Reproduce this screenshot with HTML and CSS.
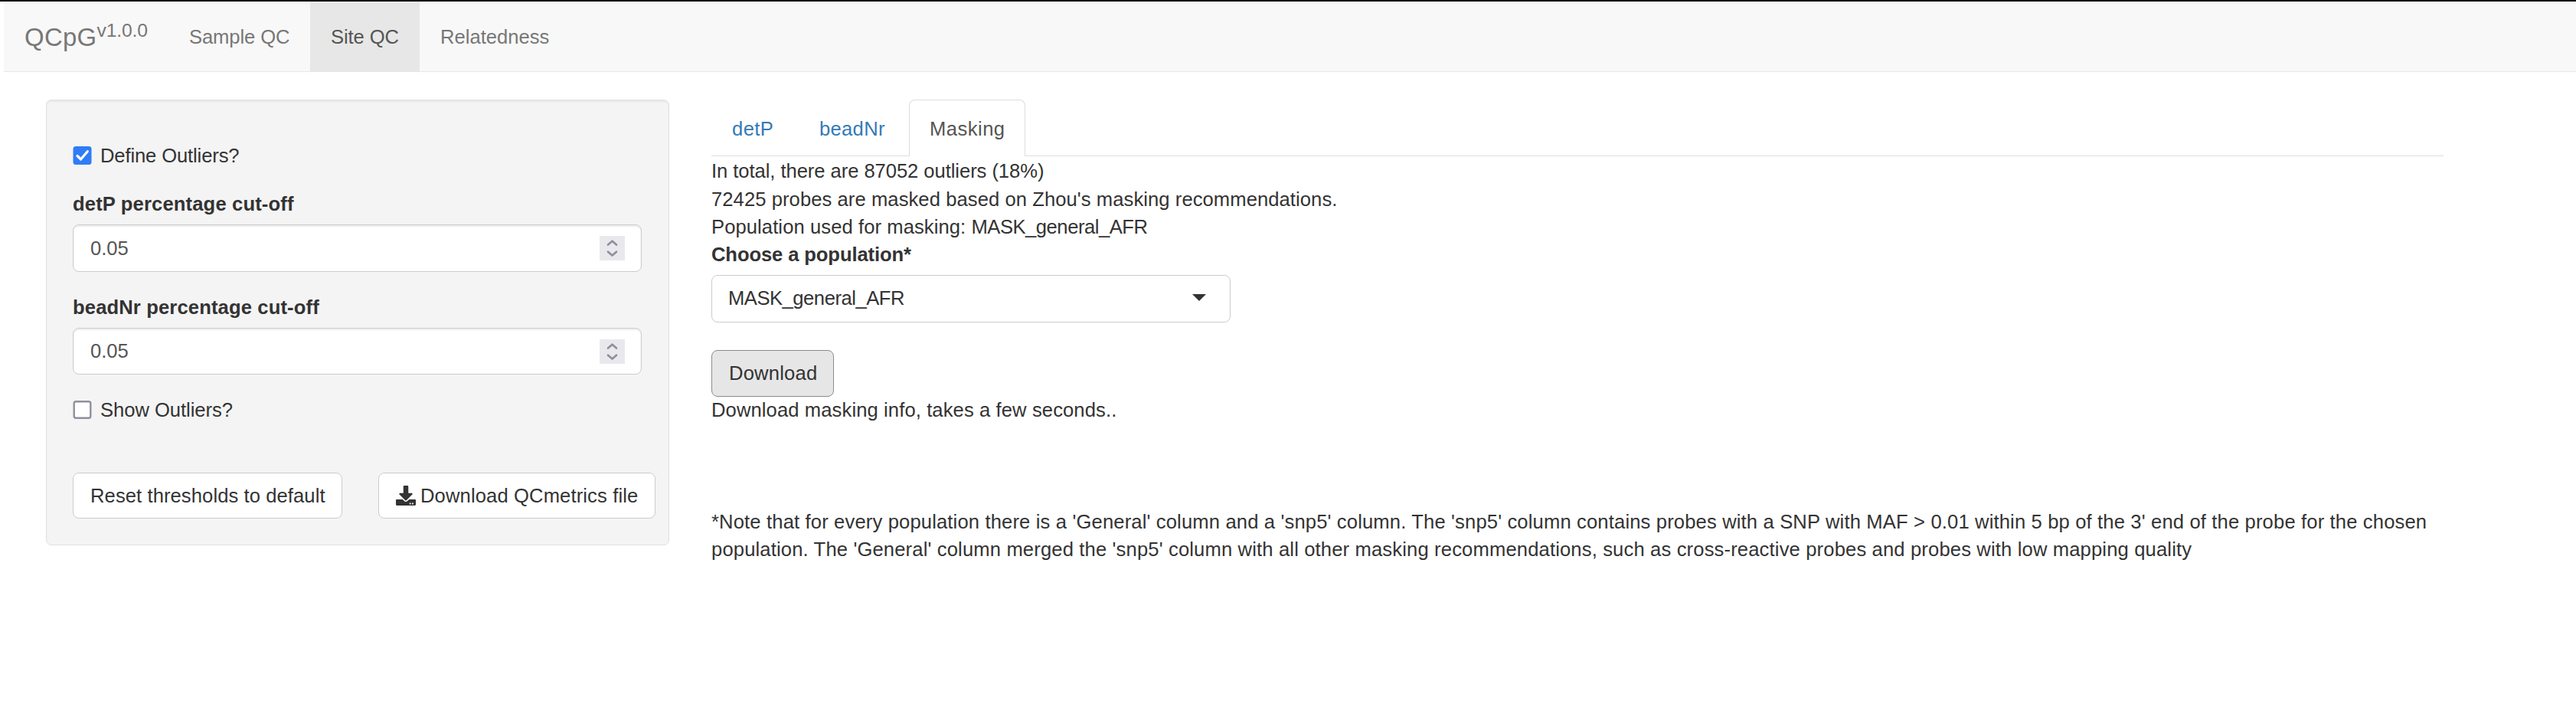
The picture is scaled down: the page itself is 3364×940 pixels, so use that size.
FILE: index.html
```
<!DOCTYPE html>
<html lang="en">
<head>
<meta charset="utf-8">
<title>QCpG</title>
<link rel="stylesheet" href="styles.css">
</head>
<body>
<nav class="navbar">
  <a class="brand">QCpG<sup>v1.0.0</sup></a>
  <a class="nav-link">Sample QC</a>
  <a class="nav-link active">Site QC</a>
  <a class="nav-link relatedness">Relatedness</a>
</nav>
<div class="page">
  <aside class="well">
    <label class="check define">
      <svg class="box" viewBox="0 0 24 24"><rect width="24" height="24" rx="3.5" fill="#2f7cf6"/><path d="M5.5 12.5 10 17 18.8 6.8" fill="none" stroke="#fff" stroke-width="3.2" stroke-linecap="round" stroke-linejoin="round"/></svg>
      <span>Define Outliers?</span>
    </label>
    <label class="field-label first">detP percentage cut-off</label>
    <div class="field"><span>0.05</span>
      <svg class="spin" viewBox="0 0 33 32"><rect width="33" height="32" fill="#e9e9ed"/><path d="M11 11.5 16.5 6.7 22 11.5M11 20.7 16.5 25.5 22 20.7" fill="none" stroke="#8f8f9d" stroke-width="2.7" stroke-linecap="round" stroke-linejoin="round"/></svg>
    </div>
    <label class="field-label second">beadNr percentage cut-off</label>
    <div class="field short"><span>0.05</span>
      <svg class="spin" viewBox="0 0 33 32"><rect width="33" height="32" fill="#e9e9ed"/><path d="M11 11.5 16.5 6.7 22 11.5M11 20.7 16.5 25.5 22 20.7" fill="none" stroke="#8f8f9d" stroke-width="2.7" stroke-linecap="round" stroke-linejoin="round"/></svg>
    </div>
    <label class="check show">
      <svg class="box" viewBox="0 0 24 24"><rect x="1.2" y="1.2" width="21.6" height="21.6" rx="2.5" fill="#fff" stroke="#8f8f9d" stroke-width="2.4"/></svg>
      <span>Show Outliers?</span>
    </label>
    <div class="actions">
      <button class="btn reset">Reset thresholds to default</button>
      <button class="btn metrics"><svg class="dl" viewBox="0 0 512 512"><path fill="#333" d="M216 0h80c13.300 0 24 10.700 24 24v168h87.700c17.800 0 26.700 21.500 14.100 34.100L269.700 378.300c-7.500 7.500-19.800 7.500-27.300 0L90.100 226.100c-12.600-12.600-3.700-34.100 14.100-34.100H192V24c0-13.300 10.700-24 24-24zm296 376v112c0 13.300-10.700 24-24 24H24c-13.300 0-24-10.700-24-24V376c0-13.300 10.700-24 24-24h146.700l49 49c20.100 20.100 52.500 20.100 72.600 0l49-49H488c13.300 0 24 10.700 24 24zm-124 88c0-11-9-20-20-20s-20 9-20 20 9 20 20 20 20-9 20-20zm64 0c0-11-9-20-20-20s-20 9-20 20 9 20 20 20 20-9 20-20z"/></svg><span>Download QCmetrics file</span></button>
    </div>
  </aside>
  <main class="content">
    <div class="tabs">
      <a class="tab detp">detP</a>
      <a class="tab bead">beadNr</a>
      <a class="tab current">Masking</a>
    </div>
    <div class="text">
      <p>In total, there are 87052 outliers (18%)</p>
      <p class="probes">72425 probes are masked based on Zhou's masking recommendations.</p>
      <p class="population">Population used for masking: <span class="mask-name">MASK_general_AFR</span></p>
      <p class="choose">Choose a population*</p>
    </div>
    <div class="select"><span class="mask-name">MASK_general_AFR</span><i class="caret"></i></div>
    <button class="btn download">Download</button>
    <p class="text info">Download masking info, takes a few seconds..</p>
    <p class="text note">*Note that for every population there is a 'General' column and a 'snp5' column. The 'snp5' column contains probes with a SNP with MAF &gt; 0.01 within 5 bp of the 3' end of the probe for the chosen<br>population. The 'General' column merged the 'snp5' column with all other masking recommendations, such as cross-reactive probes and probes with low mapping quality</p>
  </main>
</div>
</body>
</html>
```
FILE: styles.css
```
* { box-sizing: border-box; }
body {
  margin: 0;
  background: #fff;
  border-top: 2px solid #0b0909;
  font: 25.6px/36.57px "Liberation Sans", Arial, sans-serif;
  color: #333;
}
p { margin: 0; }

/* Navigation */
.navbar {
  display: flex;
  height: 92px;
  margin-left: 5px;
  background: #f8f8f8;
  border-bottom: 1px solid #e7e7e7;
  color: #777;
}
.brand {
  width: 215px;
  padding: 29px 0 0 27px;
  font-size: 32.9px;
  letter-spacing: .3px;
  white-space: nowrap;
}
.brand sup {
  font-size: 24.7px;
  line-height: 0;
  letter-spacing: -.14px;
  vertical-align: 12px;
}
.nav-link {
  height: 92px;
  padding: 28px 26px 0 27px;
  letter-spacing: -.1px;
  white-space: nowrap;
}
.nav-link.active {
  width: 143px;
  background: #e7e7e7;
  color: #555;
}
.nav-link:nth-child(2) { width: 185px; }
.relatedness { letter-spacing: 0; }

/* Page columns */
.page {
  display: grid;
  grid-template-columns: 814px 2262px;
  column-gap: 55px;
  align-items: start;
  padding: 36px 0 0 60px;
}

/* Sidebar */
.well {
  height: 582px;
  padding: 54px 17px 0 34px;
  background: #f4f4f4;
  border: 1px solid #e1e1e1;
  border-radius: 7px;
  box-shadow: inset 0 2px 2px rgba(0, 0, 0, .05);
}
.check {
  display: flex;
  align-items: center;
  gap: 11px;
  height: 36px;
}
.box { width: 25px; height: 24px; flex: none; }
.define { letter-spacing: -.13px; }
.show { margin-top: 28px; letter-spacing: -.04px; }
.field-label {
  display: block;
  height: 36px;
  font-weight: bold;
}
.field-label.first { margin-top: 27px; letter-spacing: .14px; }
.field-label.second { margin-top: 28px; letter-spacing: .13px; }
.field {
  display: flex;
  justify-content: space-between;
  align-items: center;
  width: 743px;
  height: 62px;
  margin-top: 9px;
  padding: 0 21px 0 22px;
  background: #fff;
  border: 1px solid #ccc;
  border-radius: 8px;
  box-shadow: inset 0 2px 2px rgba(0, 0, 0, .075);
  color: #555;
}
.field.short { height: 61px; }
.spin { width: 33px; height: 32px; }
.actions {
  display: flex;
  gap: 47px;
  margin-top: 64px;
}
.btn {
  display: flex;
  align-items: center;
  height: 60px;
  padding: 0 0 0 22px;
  background: #fff;
  border: 1px solid #ccc;
  border-radius: 8px;
  font: inherit;
  color: #333;
  white-space: nowrap;
}
.reset { width: 352px; letter-spacing: .08px; }
.metrics { width: 362px; letter-spacing: .12px; }
.dl { width: 26px; height: 26px; margin-right: 6px; }

/* Tabs */
.tabs {
  display: flex;
  height: 74px;
  border-bottom: 1px solid #ddd;
  color: #337ab7;
}
.tab { padding-top: 20px; white-space: nowrap; }
.detp { width: 114px; padding-left: 27px; letter-spacing: .4px; }
.bead { width: 144px; padding-left: 27px; letter-spacing: .3px; }
.current {
  width: 152px;
  height: 74px;
  padding: 19px 0 0 26px;
  background: #fff;
  border: 1px solid #ddd;
  border-bottom: 0;
  border-radius: 8px 8px 0 0;
  color: #555;
  letter-spacing: .46px;
}

/* Masking panel */
.text { white-space: nowrap; }
.tabs + .text { height: 147px; padding-top: 1px; }
.tabs + .text p:first-child { letter-spacing: -.06px; }
.probes { letter-spacing: .07px; }
.population { letter-spacing: .08px; }
.mask-name { letter-spacing: -.48px; }
.choose { margin-top: -1px; font-weight: bold; letter-spacing: -.11px; }
.select {
  display: flex;
  justify-content: space-between;
  align-items: center;
  width: 678px;
  height: 62px;
  margin-top: 8px;
  padding: 0 31px 2px 21px;
  border: 1px solid #ccc;
  border-radius: 8px;
}
.caret {
  border: 9px solid transparent;
  border-top-color: #333;
  border-bottom: 0;
  margin-bottom: 1px;
}
.download {
  width: 160px;
  height: 61px;
  margin-top: 36px;
  background: #e6e6e6;
  border-color: #8c8c8c;
  letter-spacing: .2px;
}
.info { margin-top: -1px; letter-spacing: .1px; }
.note { margin-top: 109px; letter-spacing: .144px; }
```
